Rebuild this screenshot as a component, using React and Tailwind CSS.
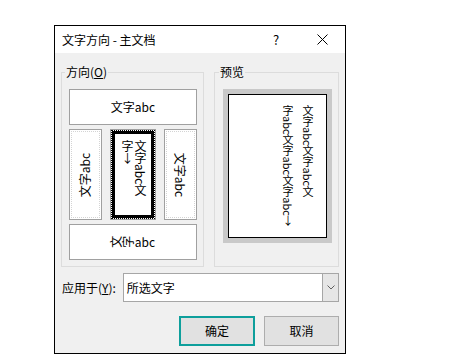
export default function App() {
  return (
    <div className="min-h-screen bg-white font-['Noto_Sans_CJK_SC',sans-serif] text-[12px] text-black">
      <div className="pl-[54px] pt-[25px]">
        <div className="flex h-[329px] w-[292px] flex-col border border-black bg-[#f0f0f0]">
          <div className="flex h-[27px] items-center bg-white">
            <span className="flex-1 pl-[7px] leading-[16px]">文字方向 - 主文档</span>
            <span className="flex h-full w-[46px] items-center justify-center text-[13px]">?</span>
            <span className="flex h-full w-[46px] items-center justify-center">
              <svg width="11" height="11" viewBox="0 0 11 11">
                <path d="M0.5 0.5 L10.5 10.5 M10.5 0.5 L0.5 10.5" stroke="#000" strokeWidth="1" fill="none" />
              </svg>
            </span>
          </div>

          <div className="flex flex-1 flex-col px-[6px] pt-[19px]">
            <div className="flex items-start gap-[10px]">
              <div className="relative h-[195px] w-[143px] border border-[#dcdcdc]">
                <span className="absolute left-[3px] top-[-9px] bg-[#f0f0f0] px-[1px] leading-[16px]">
                  方向(<span className="underline">O</span>)
                </span>
                <div className="flex flex-col gap-[4px] pl-[7px] pt-[16px]">
                  <div className="flex h-[36px] w-[128px] items-center justify-center border border-[#a0a0a0] bg-white">
                    文字abc
                  </div>
                  <div className="flex h-[91px] w-[128px] gap-[8px]">
                    <div className="w-[33px] border border-[#a0a0a0] bg-white p-[1px]">
                      <div className="flex h-full items-center justify-center border border-dotted border-[#d4d4d4]">
                        <span className="inline-block -rotate-90 whitespace-nowrap">文字abc</span>
                      </div>
                    </div>
                    <div className="w-[46px] border border-[#a0a0a0] bg-white">
                      <div className="h-full border border-dotted border-black">
                        <div className="flex h-full justify-center border-[3px] border-black pl-[2px] pt-[6px]">
                          <div className="text-[12px] leading-[13px] [writing-mode:vertical-rl]">
                            文字abc文
                            <br />
                            字<span className="[text-orientation:upright]">↓</span>
                          </div>
                        </div>
                      </div>
                    </div>
                    <div className="w-[33px] border border-[#a0a0a0] bg-white p-[1px]">
                      <div className="flex h-full items-center justify-center border border-dotted border-[#d4d4d4]">
                        <span className="inline-block rotate-90 whitespace-nowrap">文字abc</span>
                      </div>
                    </div>
                  </div>
                  <div className="flex h-[36px] w-[128px] items-center justify-center border border-[#a0a0a0] bg-white">
                    <span className="inline-block -rotate-90 whitespace-nowrap leading-[14px] [writing-mode:vertical-rl]">
                      文字abc
                    </span>
                  </div>
                </div>
              </div>

              <div className="relative h-[195px] w-[125px] border border-[#dcdcdc]">
                <span className="absolute left-[4px] top-[-9px] bg-[#f0f0f0] px-[1px] leading-[16px]">预览</span>
                <div className="ml-[8px] mt-[16px] h-[154px] w-[109px] bg-[#c9c9c9] p-[5px]">
                  <div className="flex h-full justify-end border border-black bg-white pr-[8px] pt-[10px]">
                    <div className="text-[11px] leading-[20px] [writing-mode:vertical-rl]">
                      文字abc文字abc文
                      <br />
                      字abc文字abc文字abc<span className="[text-orientation:upright]">↓</span>
                    </div>
                  </div>
                </div>
              </div>
            </div>

            <div className="mt-[6px] flex h-[29px] items-center">
              <span className="w-[62px] pl-[1px]">
                应用于(<span className="underline">Y</span>):
              </span>
              <div className="flex h-full w-[217px] border border-[#a6a6a6] bg-white">
                <span className="flex flex-1 items-center pl-[3px]">所选文字</span>
                <span className="flex w-[16px] items-center justify-center border-l border-[#a6a6a6] bg-[#e6e6e6]">
                  <svg width="8" height="5" viewBox="0 0 8 5">
                    <path d="M0.5 0.5 L4 4 L7.5 0.5" stroke="#606060" strokeWidth="1" fill="none" />
                  </svg>
                </span>
              </div>
            </div>

            <div className="mt-[14px] flex justify-end gap-[9px]">
              <button className="h-[30px] w-[76px] border-2 border-[#0e9f9c] bg-[#e1e1e1]">确定</button>
              <button className="h-[30px] w-[75px] border border-[#adadad] bg-[#e1e1e1]">取消</button>
            </div>
          </div>
        </div>
      </div>
    </div>
  );
}
